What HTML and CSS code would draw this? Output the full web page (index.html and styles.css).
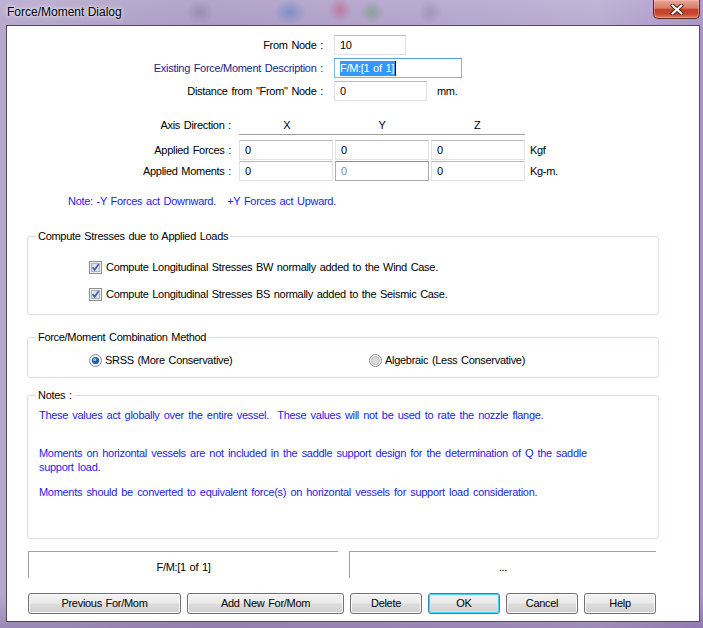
FILE: index.html
```html
<!DOCTYPE html>
<html>
<head>
<meta charset="utf-8">
<title>Force/Moment Dialog</title>
<link rel="stylesheet" href="styles.css">
</head>
<body>
<div class="window">
  <div class="titlebar">
    <span class="title">Force/Moment Dialog</span>
    <div class="close">
      <svg width="14" height="11" viewBox="0 0 14 11">
        <path d="M2.5 1.5 L11.5 9.5 M11.5 1.5 L2.5 9.5" stroke="#4a1b14" stroke-width="4" stroke-linecap="round"/>
        <path d="M2.5 1.5 L11.5 9.5 M11.5 1.5 L2.5 9.5" stroke="#ffffff" stroke-width="2.2" stroke-linecap="round"/>
      </svg>
    </div>
  </div>
  <div class="client">
    <div class="top-form">
      <label class="lbl">From Node :</label>
      <div class="field"><input class="tb w-node" value="10" readonly></div>
      <label class="lbl lbl-blue">Existing Force/Moment Description :</label>
      <div class="field"><div class="tb tb-focus w-desc"><span class="sel">F/M:[1 of 1]</span><span class="caret"></span></div></div>
      <label class="lbl">Distance from "From" Node :</label>
      <div class="field"><input class="tb w-dist" value="0" readonly><span class="unit">mm.</span></div>
    </div>

    <div class="axis">
      <div class="alabel">Axis Direction :</div>
      <div class="ahead"><span>X</span><span>Y</span><span>Z</span></div>
      <div></div>
      <div class="alabel">Applied Forces :</div>
      <input class="tb" value="0" readonly>
      <input class="tb" value="0" readonly>
      <input class="tb" value="0" readonly>
      <div class="aunit">Kgf</div>
      <div class="alabel">Applied Moments :</div>
      <input class="tb" value="0" readonly>
      <input class="tb tb-dim" value="0" readonly>
      <input class="tb" value="0" readonly>
      <div class="aunit">Kg-m.</div>
    </div>

    <p class="note">Note: -Y Forces act Downward.&nbsp;&nbsp; +Y Forces act Upward.</p>

    <fieldset class="group g-stress">
      <legend>Compute Stresses due to Applied Loads</legend>
      <div class="opt">
        <svg class="box" width="13" height="13" viewBox="0 0 13 13"><rect x=".5" y=".5" width="12" height="12" fill="#f0f0f0" stroke="#8e8f8f"/><rect x="2.5" y="2.5" width="8" height="8" fill="#dfe3ea" stroke="#aeb3bb"/><path d="M3.6 6.3 L5.6 8.9 L9.6 3.3" fill="none" stroke="#3f5ea8" stroke-width="1.7"/></svg>
        <span>Compute Longitudinal Stresses BW normally added to the Wind Case.</span>
      </div>
      <div class="opt">
        <svg class="box" width="13" height="13" viewBox="0 0 13 13"><rect x=".5" y=".5" width="12" height="12" fill="#f0f0f0" stroke="#8e8f8f"/><rect x="2.5" y="2.5" width="8" height="8" fill="#dfe3ea" stroke="#aeb3bb"/><path d="M3.6 6.3 L5.6 8.9 L9.6 3.3" fill="none" stroke="#3f5ea8" stroke-width="1.7"/></svg>
        <span>Compute Longitudinal Stresses BS normally added to the Seismic Case.</span>
      </div>
    </fieldset>

    <fieldset class="group g-comb">
      <legend>Force/Moment Combination Method</legend>
      <div class="radios">
        <div class="opt r1">
          <svg class="box" width="13" height="13" viewBox="0 0 13 13"><circle cx="6.5" cy="6.5" r="6" fill="#eeeeee" stroke="#8e8f8f"/><circle cx="6.5" cy="6.5" r="3.6" fill="#1f5f9e"/><circle cx="5.8" cy="5.6" r="1.6" fill="#7fc3f0"/></svg>
          <span>SRSS (More Conservative)</span>
        </div>
        <div class="opt r2">
          <svg class="box" width="13" height="13" viewBox="0 0 13 13"><circle cx="6.5" cy="6.5" r="6" fill="#f2f2f2" stroke="#8e8f8f"/><circle cx="6.5" cy="6.5" r="4" fill="#d8d8d8" stroke="#c4c4c4"/></svg>
          <span>Algebraic (Less Conservative)</span>
        </div>
      </div>
    </fieldset>

    <fieldset class="group g-notes">
      <legend>Notes :</legend>
      <p class="n1">These values act globally over the entire vessel.&nbsp; These values will not be used to rate the nozzle flange.</p>
      <p class="n2">Moments on horizontal vessels are not included in the saddle support design for the determination of Q the saddle<br>support load.</p>
      <p class="n3">Moments should be converted to equivalent force(s) on horizontal vessels for support load consideration.</p>
    </fieldset>

    <div class="status">
      <div class="panel p-left">F/M:[1 of 1]</div>
      <div class="panel p-right">...</div>
    </div>

    <div class="buttons">
      <button class="btn b-prev">Previous For/Mom</button>
      <button class="btn b-add">Add New For/Mom</button>
      <button class="btn b-small">Delete</button>
      <button class="btn b-small b-ok">OK</button>
      <button class="btn b-small">Cancel</button>
      <button class="btn b-small">Help</button>
    </div>
  </div>
</div>
</body>
</html>
```
FILE: styles.css
```css
* { box-sizing: border-box; }
html, body { margin: 0; padding: 0; }
body {
  width: 703px;
  height: 628px;
  overflow: hidden;
  font-family: "Liberation Sans", Arial, sans-serif;
  font-size: 11px;
  letter-spacing: -0.3px;
  word-spacing: 1px;
  color: #000;
}

.window {
  width: 703px;
  height: 628px;
  padding: 0 3px 6px 6px;
  display: flex;
  flex-direction: column;
  background:
    radial-gradient(ellipse 16px 13px at 290px 12px, rgba(60,120,200,0.45), rgba(60,120,200,0) 100%),
    radial-gradient(ellipse 12px 13px at 340px 10px, rgba(200,40,80,0.35), rgba(200,40,80,0) 100%),
    radial-gradient(ellipse 12px 12px at 372px 12px, rgba(60,150,60,0.35), rgba(60,150,60,0) 100%),
    radial-gradient(ellipse 14px 12px at 200px 12px, rgba(90,80,120,0.25), rgba(90,80,120,0) 100%),
    radial-gradient(ellipse 12px 12px at 430px 12px, rgba(90,80,120,0.22), rgba(90,80,120,0) 100%),
    linear-gradient(180deg, rgba(255,255,255,0.12) 0%, rgba(255,255,255,0) 30px, rgba(0,0,0,0) 95%, rgba(70,40,110,0.25) 100%),
    linear-gradient(90deg, #b6a8cc 0%, #aa9bc4 30%, #b2a2cb 60%, #b9abd0 85%, #a993c6 100%);
}

.titlebar {
  height: 25px;
  display: flex;
  align-items: flex-start;
}
.title {
  padding: 5px 0 0 1px;
  font-size: 12px;
  line-height: 14px;
  letter-spacing: 0;
  word-spacing: 0;
  color: #000;
  text-shadow: 0 0 6px rgba(255,255,255,0.9), 0 0 3px rgba(255,255,255,0.8);
}
.close {
  margin-left: auto;
  width: 47px;
  height: 19px;
  border: 1px solid #5e2a26;
  border-top: none;
  border-radius: 0 0 5px 5px;
  background: linear-gradient(180deg, #e8a89a 0%, #d77b67 45%, #c4432c 52%, #c5452c 75%, #dc7a5e 100%);
  box-shadow: inset 0 0 0 1px rgba(255,200,190,0.45);
  display: flex;
  align-items: center;
  justify-content: center;
}

.client {
  width: 694px;
  height: 597px;
  border: 1px solid #53476a;
  background: #fff;
  display: flex;
  flex-direction: column;
}

/* top form */
.top-form {
  display: grid;
  grid-template-columns: 320px auto;
  column-gap: 7px;
  row-gap: 3px;
  padding-top: 9px;
}
.lbl {
  text-align: right;
  padding-right: 4px;
  line-height: 20px;
}
.lbl-blue { color: #23238c; }
.field {
  display: flex;
  align-items: center;
  gap: 10px;
}
.tb {
  height: 20px;
  border: 1px solid #dfe3e8;
  border-top-color: #b9bcc2;
  background: #fff;
  font: inherit;
  letter-spacing: inherit;
  color: #000;
  padding: 0 0 0 5px;
  margin: 0;
  outline: none;
  display: block;
}
.w-node { width: 72px; }
.w-dist { width: 93px; }
.w-desc { width: 128px; }
.tb-focus {
  border-color: #7eb4ea;
  border-top-color: #569de5;
  display: flex;
  align-items: center;
}
.sel {
  background: #3399ff;
  color: #fff;
  line-height: 15px;
  padding-right: 1px;
}
.caret {
  width: 1px;
  height: 15px;
  background: #000;
}
.unit { line-height: 20px; }

/* axis grid */
.axis {
  display: grid;
  grid-template-columns: 230px 94px 94px 94px auto;
  column-gap: 2px;
  row-gap: 1px;
  margin-top: 15px;
}
.alabel {
  text-align: right;
  padding-right: 6px;
  line-height: 20px;
}
.axis > .alabel:first-child { line-height: 18px; }
.ahead {
  grid-column: 2 / 5;
  display: grid;
  grid-template-columns: 1fr 1fr 1fr;
  border-bottom: 1px solid #a0a0a0;
  height: 19px;
  line-height: 18px;
  text-align: center;
  margin-bottom: 4px;
}
.axis .tb { width: 94px; }
.tb-dim {
  border-color: #acacac;
  border-top-color: #8d8d8d;
  color: #8a8a8a;
}
.aunit {
  padding-left: 3px;
  line-height: 20px;
}

.note {
  margin: 13px 0 0 61px;
  line-height: 14px;
  color: #1c1cf0;
}

/* group boxes */
.group {
  margin: 0 0 0 20px;
  width: 632px;
  border: 1px solid #d5dfe5;
  border-radius: 3px;
  padding: 0 8px;
}
.group legend {
  padding: 0 2px;
  line-height: 14px;
  color: #000;
}
.g-stress {
  margin-top: 21px;
  padding-top: 17px;
  padding-bottom: 13px;
  display: flex;
  flex-direction: column;
  gap: 13px;
}
.opt {
  display: flex;
  align-items: center;
  height: 14px;
  line-height: 14px;
  gap: 4px;
}
.g-stress .opt { padding-left: 53px; }
.g-comb {
  margin-top: 15px;
  padding-top: 9px;
  padding-bottom: 10px;
}
.radios {
  display: flex;
}
.r1 { margin-left: 53px; width: 280px; gap: 3px; }
.r2 { gap: 3px; }

.g-notes {
  margin-top: 10px;
  padding: 6px 11px 39px 11px;
  color: #1c1cf0;
  word-spacing: 1.5px;
}
.g-notes legend { color: #000; word-spacing: 1px; margin-left: -3px; }
.g-notes p {
  margin: 0;
  line-height: 14px;
}
.g-notes .n2 { margin-top: 24px; }
.g-notes .n3 { margin-top: 11px; }

/* status panels */
.status {
  display: flex;
  gap: 11px;
  margin: 12px 0 0 21px;
}
.panel {
  height: 27px;
  border-top: 1px solid #a0a0a0;
  border-left: 1px solid #a0a0a0;
  display: flex;
  align-items: center;
  justify-content: center;
  padding-top: 3px;
}
.p-left { width: 310px; }
.p-right { width: 307px; }

/* buttons */
.buttons {
  display: flex;
  gap: 6px;
  margin: 15px 0 0 21px;
}
.btn {
  height: 21px;
  border: 1px solid #707070;
  border-radius: 3px;
  background: linear-gradient(180deg, #f2f2f2 0%, #ebebeb 48%, #dddddd 52%, #cfcfcf 100%);
  box-shadow: inset 0 0 0 1px #fbfbfb;
  font: inherit;
  letter-spacing: inherit;
  word-spacing: inherit;
  color: #000;
  padding: 0;
  margin: 0;
  text-align: center;
  line-height: 19px;
}
.b-prev { width: 153px; }
.b-add { width: 157px; }
.b-small { width: 72px; }
.b-ok {
  border-color: #3c7fb1;
  box-shadow: inset 0 0 0 1px #48d3fd, inset 0 0 0 2px rgba(200,240,255,0.6);
}
```
